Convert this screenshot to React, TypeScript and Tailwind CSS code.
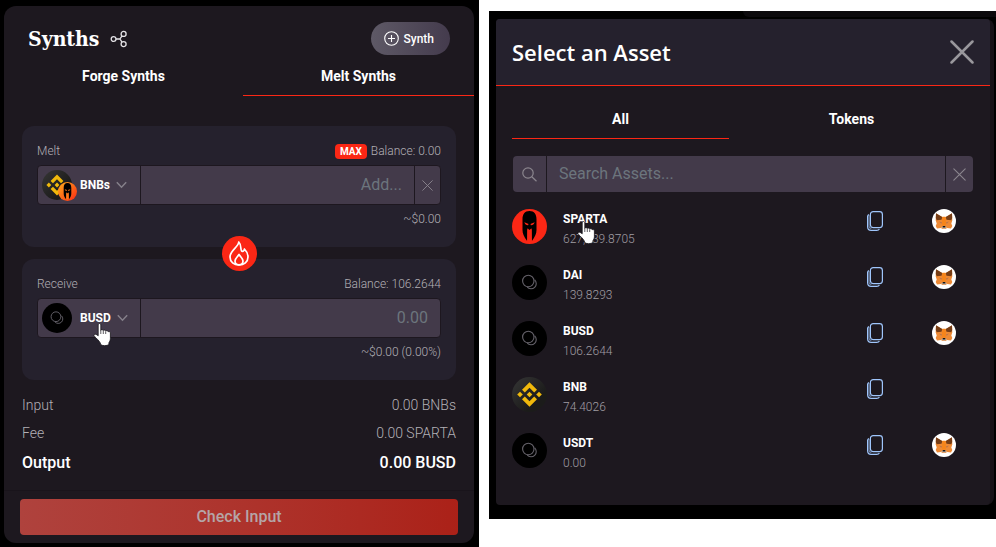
import type { ReactNode } from "react";

function ShareNodes() {
  return (
    <svg width="18" height="18" viewBox="0 0 18 18" fill="none" stroke="#e4e2e6" strokeWidth="1.3" aria-hidden="true">
      <circle cx="3.6" cy="9" r="2.4" />
      <circle cx="13.6" cy="3.9" r="2.5" />
      <circle cx="13.6" cy="14.1" r="2.5" />
      <path d="M6 9h4M12 5.900L10 9l2 3.100" />
    </svg>
  );
}

function PlusCircle() {
  return (
    <svg width="15" height="15" viewBox="0 0 15 15" fill="none" stroke="#fff" strokeWidth="1.1" aria-hidden="true">
      <circle cx="7.5" cy="7.5" r="6.8" />
      <path d="M7.5 4v7M4 7.5h7" />
    </svg>
  );
}

function Chevron() {
  return (
    <svg width="11" height="8" viewBox="0 0 11 8" fill="none" stroke="#85808a" strokeWidth="1.5" aria-hidden="true">
      <path d="M.8 1.300l4.700 4.900 4.700-4.900" />
    </svg>
  );
}

function Cross({ size, width, color }: { size: number; width: number; color: string }) {
  return (
    <svg width={size} height={size} viewBox="0 0 24 24" fill="none" stroke={color} strokeWidth={width} strokeLinecap="round" aria-hidden="true">
      <path d="M1.5 1.5l21 21M22.5 1.5l-21 21" />
    </svg>
  );
}

function Flame() {
  return (
    <svg width="20" height="25" viewBox="0 0 20 25" fill="none" stroke="#fff" strokeWidth="1.7" strokeLinejoin="round" aria-hidden="true">
      <path d="M9.800 1C9.500 6 1 9.500 1 16c0 4.800 4 8 9 8s9-3.200 9-8c0-3.200-1.600-6-3.600-8-.2 1.500-1 2.400-2 2.400C10.800 10.400 13 4 9.800 1z" />
      <path d="M10 13.500c-1.200 2-4 4-4 6.500 0 2.500 1.800 3.800 4 3.800s4-1.300 4-3.800c0-2.500-2.800-4.500-4-6.500z" />
    </svg>
  );
}

function BnbCoin({ size }: { size: number }) {
  return (
    <svg className="shrink-0" width={size} height={size} viewBox="0 0 35 35" aria-hidden="true">
      <defs>
        <linearGradient id="coin" x1="0" y1="0" x2="1" y2="1">
          <stop offset="0" stopColor="#363636" />
          <stop offset="0.7" stopColor="#1b1b1a" />
        </linearGradient>
      </defs>
      <circle cx="17.500" cy="17.500" r="17.500" fill="url(#coin)" />
      <g fill="#f0b90b">
        <path d="M17.500 5.200l7.500 7.500-2.800 2.800-4.700-4.700-4.700 4.700-2.800-2.800z" />
        <path d="M17.500 29.800l7.500-7.500-2.800-2.800-4.700 4.700-4.700-4.700-2.800 2.800z" />
        <path d="M17.500 14.700l2.800 2.800-2.800 2.800-2.800-2.800z" />
        <path d="M8 14.700l2.800 2.800L8 20.300l-2.800-2.800z" />
        <path d="M27 14.700l2.800 2.800-2.800 2.800-2.800-2.800z" />
      </g>
    </svg>
  );
}

function SynthCoin({ size }: { size: number }) {
  return (
    <svg className="shrink-0" width={size} height={size} viewBox="0 0 35 35" fill="none" aria-hidden="true">
      <circle cx="17.500" cy="17.500" r="17.500" fill="#000" />
      <g stroke="#65626a" strokeWidth="1.1">
        <circle cx="16.300" cy="16" r="5.700" />
        <path d="M22.700 14.900a5.200 5.200 0 1 1-7.500 7.200" />
      </g>
    </svg>
  );
}

function SpartaCoin({ size, warm = false }: { size: number; warm?: boolean }) {
  const accent = warm ? "#ff7a18" : "#fb2715";
  return (
    <svg className="shrink-0" width={size} height={size} viewBox="0 0 35 35" aria-hidden="true">
      <defs>
        <linearGradient id="ember" x1="0" y1="0" x2="1" y2="1">
          <stop offset="0" stopColor="#ffae1a" />
          <stop offset="1" stopColor="#fb2715" />
        </linearGradient>
      </defs>
      <circle cx="17.500" cy="17.500" r="17.500" fill={warm ? "url(#ember)" : "#fb2715"} />
      <path
        fill="#000"
        d="M17.500 2c-4.800 0-7 3.200-7 8.500v10.500c0 3.500 1.500 7 4.600 11l.4-11.500h4l.4 11.500c3.100-4 4.600-7.500 4.600-11V10.500C24.500 5.200 22.300 2 17.500 2z"
      />
      <path fill={accent} d="M12.300 13.200l4.300 1.700-.4 1.300c-2 .1-3.100-.8-3.900-3zM22.700 13.200l-4.300 1.700.4 1.300c2 .1 3.100-.8 3.900-3z" />
      <path fill={accent} d="M15.300 19.500l2.200.8 2.200-.8v12.500h-4.400z" />
      <path fill="#000" d="M16.800 15h1.400v5.800h-1.400z" />
    </svg>
  );
}

function CopyIcon() {
  return (
    <svg width="16" height="20" viewBox="0 0 16 20" fill="none" stroke="#9fc5fb" aria-hidden="true">
      <path strokeWidth="1.200" d="M1.900 3.500C.9 4 .6 4.600.6 5.600v10.200c0 2.200 1.400 3.600 3.600 3.600h5.600c1.200 0 2-.3 2.600-1.200" />
      <path strokeWidth="1.200" strokeOpacity="0.600" d="M2 4v11c0 1.600.8 2.400 2.400 2.400" />
      <rect x="3.400" y="0.600" width="12" height="16" rx="2.800" strokeWidth="1.200" />
    </svg>
  );
}

function Fox() {
  return (
    <svg width="24" height="24" viewBox="0 0 24 24" aria-hidden="true">
      <circle cx="12" cy="12" r="12" fill="#fff" />
      <path fill="#ee8a35" d="M4 4.500l6 3.500h4l6-3.500.3 7-1 3 1 2.500-1.300 2.500-4-.5-1.500 1h-3l-1.500-1-4 .5L3.700 17l1-2.500-1-3z" />
      <path fill="#763d16" d="M4 4.300l6.300 3.600-.8 2.800-4.800.6-.9-2.300zM20 4.300l-6.300 3.600.8 2.800 4.800.6.900-2.300z" />
      <path fill="#f6851b" d="M10.300 7.800h3.400l.3 8.700h-4z" />
      <path fill="#b9744a" d="M7 12.500l3.200.9-1 1.400zM17 12.500l-3.200.9 1 1.400z" />
      <path fill="#cdbdb2" d="M9 18.300l1.700-.8h2.600l1.700.8-1.800 1.200h-2.400z" />
      <path fill="#161616" d="M10.800 17h2.400l.3 1.500h-3z" />
    </svg>
  );
}

function HandPointer() {
  return (
    <svg width="18" height="24" viewBox="0 0 18 24" aria-hidden="true">
      <path
        fill="#fff"
        stroke="#17141b"
        strokeWidth="0.800"
        strokeLinejoin="round"
        d="M5.200 1.800c0-1.700 2.600-1.700 2.600 0v5.400c.5-.9 2.200-.7 2.400.4.600-.8 2.200-.6 2.400.5.700-.8 2.300-.5 2.700.6.900-.5 2.100.1 2.100 1.300v5.600c0 2-.8 3-1.500 4.200v1.800c-2 1.400-6.500 1.400-8.200 0 0-2.200-2.600-4.600-4.700-6.700C1.600 13.500.6 12.600 1 11.900c.6-1.300 2.800-.6 4.200.9z"
      />
      <path stroke="#17141b" strokeWidth="0.700" d="M7.800 7v4M10.300 8v3M12.700 8.500V11" />
    </svg>
  );
}

type AmountBoxProps = {
  id: string;
  label: string;
  balance: string;
  asset: string;
  coin: ReactNode;
  placeholder: string;
  value: string;
  max?: boolean;
  clearable?: boolean;
  pointer?: boolean;
};

function AmountBox({ id, label, balance, asset, coin, placeholder, value, max, clearable, pointer }: AmountBoxProps) {
  return (
    <div className="rounded-xl bg-[#25212d] px-[15px] pt-[15px] pb-[18px] text-xs font-light text-[#b3b0b6]">
      <div className="flex h-5 items-center justify-between">
        <label htmlFor={id}>{label}</label>
        <div className="flex items-center gap-1">
          {max && <button className="h-[15px] rounded bg-[#fb2715] px-[5px] text-[10px] leading-[15px] font-bold text-white">MAX</button>}
          <span>Balance: {balance}</span>
        </div>
      </div>
      <div className="my-1 flex h-10 rounded border border-[#1d171f] bg-[#433a4a]">
        <button className="relative flex w-[103px] items-center border-r border-[#1d171f] pl-1">
          <span className="relative">{coin}</span>
          <span className="ml-2 text-xs font-bold text-white">{asset}</span>
          <span className="ml-[6px]">
            <Chevron />
          </span>
          {pointer && (
            <span className="absolute top-6 left-[55px]">
              <HandPointer />
            </span>
          )}
        </button>
        <input id={id} placeholder={placeholder} className="min-w-0 flex-1 bg-transparent px-3 text-right text-base font-normal outline-none placeholder:text-[#6c757d]" />
        {clearable && (
          <button aria-label="Clear amount" className="flex w-[26px] items-center justify-center border-l border-[#1d171f]">
            <Cross size={11} width={2} color="#8b868e" />
          </button>
        )}
      </div>
      <div className="h-5 text-right leading-5">{value}</div>
    </div>
  );
}

function SwapPanel() {
  return (
    <section className="mt-[6px] mr-[5px] mb-1 ml-1 rounded-xl bg-[#1d181f]">
      <header className="flex items-center justify-between px-6 pt-4">
        <div className="flex items-center gap-[11px]">
          <h1 className="font-['DejaVu_Serif_Condensed','DejaVu_Serif',serif] text-[21px] leading-8 font-bold text-white">Synths</h1>
          <button aria-label="Share">
            <ShareNodes />
          </button>
        </div>
        <button className="flex h-[33px] items-center gap-[5px] rounded-full bg-linear-to-r from-[#5e5966] to-[#443b4d] pr-4 pl-[13px] text-xs font-medium text-white">
          <PlusCircle />
          Synth
        </button>
      </header>
      <nav className="flex h-[41px] gap-1 pl-1 text-sm font-bold text-white">
        <button className="flex-1 border-b border-transparent pt-[2px]">Forge Synths</button>
        <button className="flex-1 border-b border-[#fb2715] pt-[2px]">Melt Synths</button>
      </nav>
      <div className="px-[18px] pt-[30px]">
        <AmountBox
          id="melt"
          label="Melt"
          balance="0.00"
          asset="BNBs"
          coin={
            <>
              <BnbCoin size={30} />
              <span className="absolute top-3 left-4">
                <SpartaCoin size={19} warm />
              </span>
            </>
          }
          placeholder="Add..."
          value="~$0.00"
          max
          clearable
        />
        <div className="relative z-10 flex h-3 items-center justify-center">
          <button aria-label="Melt" className="flex size-[35px] shrink-0 items-center justify-center rounded-full bg-[#fb2715]">
            <Flame />
          </button>
        </div>
        <AmountBox id="receive" label="Receive" balance="106.2644" asset="BUSD" coin={<SynthCoin size={30} />} placeholder="0.00" value="~$0.00 (0.00%)" pointer />
        <dl className="py-[11px] text-sm font-light text-[#b3b0b6]">
          <div className="flex h-7 items-center justify-between">
            <dt>Input</dt>
            <dd>0.00 BNBs</dd>
          </div>
          <div className="flex h-7 items-center justify-between">
            <dt>Fee</dt>
            <dd>0.00 SPARTA</dd>
          </div>
          <div className="flex h-8 items-center justify-between text-base font-medium text-white">
            <dt>Output</dt>
            <dd>0.00 BUSD</dd>
          </div>
        </dl>
      </div>
      <footer className="border-t border-[#19141b] px-4 py-2">
        <button className="h-9 w-full rounded bg-linear-to-r from-[#af423d] to-[#ab2118] text-base font-medium text-[#b5a5a7]">Check Input</button>
      </footer>
    </section>
  );
}

const assets = [
  { name: "SPARTA", balance: "627,339.8705", coin: <SpartaCoin size={35} />, wallet: true, pointer: true },
  { name: "DAI", balance: "139.8293", coin: <SynthCoin size={35} />, wallet: true, pointer: false },
  { name: "BUSD", balance: "106.2644", coin: <SynthCoin size={35} />, wallet: true, pointer: false },
  { name: "BNB", balance: "74.4026", coin: <BnbCoin size={35} />, wallet: false, pointer: false },
  { name: "USDT", balance: "0.00", coin: <SynthCoin size={35} />, wallet: true, pointer: false },
];

function AssetDialog() {
  return (
    <section className="overflow-hidden rounded bg-[#1d181f]">
      <header className="flex h-[67px] items-center justify-between border-b border-[#fb2715] bg-[#25212d] px-4">
        <h2 className="font-['Open_Sans',sans-serif] text-[22px] leading-8 font-semibold text-white">Select an Asset</h2>
        <button aria-label="Close">
          <Cross size={24} width={2.500} color="#99979c" />
        </button>
      </header>
      <nav className="mt-[14px] flex h-[39px] gap-[14px] pr-[30px] pl-4 text-sm font-bold text-white">
        <button className="flex-1 border-b border-[#fb2715]">All</button>
        <button className="flex-1 border-b border-transparent">Tokens</button>
      </nav>
      <div className="mx-[17px] mt-[17px] flex h-9 rounded bg-[#433a4a]">
        <label htmlFor="search" aria-label="Search" className="flex w-[34px] items-center justify-center border-r border-[#1d181f]">
          <svg width="15" height="15" viewBox="0 0 15 15" fill="none" stroke="#8b868e" strokeWidth="1.200" aria-hidden="true">
            <circle cx="6" cy="6" r="5.200" />
            <path d="M9.800 9.800l4.700 4.500" />
          </svg>
        </label>
        <input id="search" placeholder="Search Assets..." className="min-w-0 flex-1 bg-transparent px-3 text-base outline-none placeholder:text-[#6c757d]" />
        <button aria-label="Clear search" className="flex w-7 items-center justify-center border-l border-[#1d181f]">
          <Cross size={13} width={2} color="#8b868e" />
        </button>
      </div>
      <ul className="mt-4 mb-[17px] pr-[34px] pl-4">
        {assets.map((asset) => (
          <li key={asset.name} className="flex h-14 items-start gap-4 pt-px">
            {asset.coin}
            <button className="relative flex-1 text-left text-xs leading-5">
              <span className="block h-5 font-bold text-white">{asset.name}</span>
              <span className="block font-light text-[#a09da3]">{asset.balance}</span>
              {asset.pointer && (
                <span className="absolute top-3 left-[14px]">
                  <HandPointer />
                </span>
              )}
            </button>
            <button aria-label={`Copy ${asset.name} address`} className="mt-[2px] mr-[33px]">
              <CopyIcon />
            </button>
            <div className="w-6">
              {asset.wallet && (
                <button aria-label={`Add ${asset.name} to wallet`} className="block">
                  <Fox />
                </button>
              )}
            </div>
          </li>
        ))}
      </ul>
    </section>
  );
}

export default function App() {
  return (
    <main className="flex min-h-screen gap-[10px] bg-white font-[Roboto,sans-serif]">
      <div className="min-w-0 flex-[479] bg-black">
        <SwapPanel />
      </div>
      <div className="mt-[11px] min-w-0 flex-[507] self-start bg-black pb-[14px]">
        <div className="flex h-2 justify-end">
          <div className="h-[6px] w-1/2 rounded-bl-lg bg-[#0c0a0d]" />
        </div>
        <div className="mr-[2px] ml-[7px] rounded-lg bg-[#171217] pr-1">
          <AssetDialog />
        </div>
      </div>
    </main>
  );
}
